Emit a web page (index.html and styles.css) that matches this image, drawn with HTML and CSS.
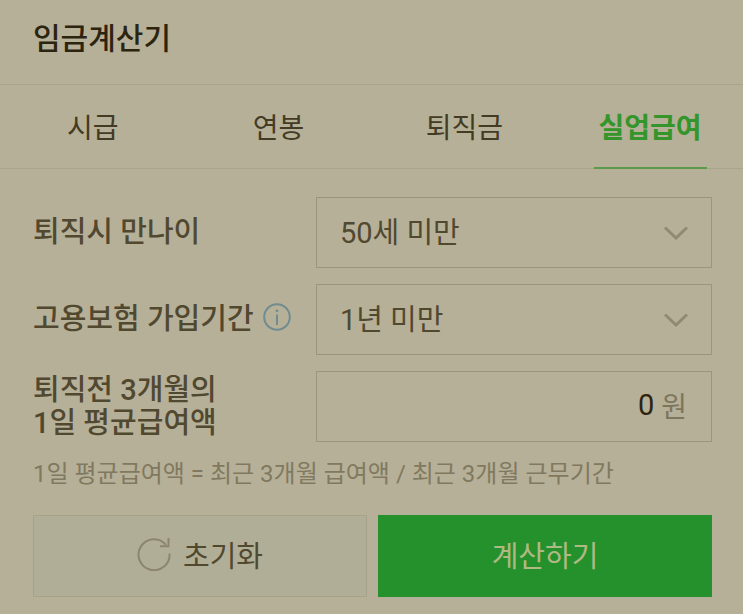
FILE: index.html
```html
<!DOCTYPE html>
<html lang="ko">
<head>
  <meta charset="UTF-8" />
  <meta name="viewport" content="width=device-width, initial-scale=1.0"/>
  <title>임금계산기</title>
  <link rel="stylesheet" href="styles.css">
</head>
<body>

  <header class="header">
    <h1>임금계산기</h1>
  </header>

  <nav class="tabs">
    <a href="#hourly">시급</a>
    <a href="#salary">연봉</a>
    <a href="#severance">퇴직금</a>
    <a href="#benefit" class="active" aria-current="page">실업급여</a>
  </nav>

  <form class="calc-form">
    <div class="form-row">
      <label for="age">퇴직시 만나이</label>
      <div class="field">
        <select id="age">
          <option>50세 미만</option>
          <option>50세 이상</option>
        </select>
        <svg class="arrow" viewBox="0 0 24 14" aria-hidden="true"><path d="M1 1.5 12 12 23 1.5"/></svg>
      </div>
    </div>

    <div class="form-row">
      <div class="label-group">
        <label for="period">고용보험 가입기간</label>
        <button type="button" class="info-btn" aria-label="가입기간 안내">
          <svg viewBox="0 0 28 28" aria-hidden="true">
            <circle cx="14" cy="14" r="12.8"/>
            <path d="M14 11.5V22"/>
            <circle class="dot" cx="14" cy="7.8" r="1.4"/>
          </svg>
        </button>
      </div>
      <div class="field">
        <select id="period">
          <option>1년 미만</option>
          <option>1년 이상 3년 미만</option>
          <option>3년 이상 5년 미만</option>
          <option>5년 이상 10년 미만</option>
          <option>10년 이상</option>
        </select>
        <svg class="arrow" viewBox="0 0 24 14" aria-hidden="true"><path d="M1 1.5 12 12 23 1.5"/></svg>
      </div>
    </div>

    <div class="form-row">
      <label for="pay">퇴직전 3개월의<br>1일 평균급여액</label>
      <div class="field amount">
        <input type="text" id="pay" inputmode="numeric" value="0" />
        <span class="unit">원</span>
      </div>
    </div>

    <p class="hint">1일 평균급여액 = 최근 3개월 급여액 / 최근 3개월 근무기간</p>

    <div class="buttons">
      <button type="reset" class="btn btn-reset">
        <svg viewBox="0 0 34 34" aria-hidden="true">
          <path d="M32.5 16.5A15.5 15.5 0 1 1 29 7.8"/>
          <path d="M31.5 1V9.2H23"/>
        </svg>
        초기화
      </button>
      <button type="submit" class="btn btn-submit">계산하기</button>
    </div>
  </form>

</body>
</html>
```

FILE: styles.css
```css
* {
  box-sizing: border-box;
}
body {
  margin: 0;
  background: #b6b098;
  color: #514830;
  font-family: Roboto, "Noto Sans CJK KR", sans-serif;
  font-size: 29px;
}
.header {
  padding: 15px 33px 21px;
  border-bottom: 1px solid #aaa48c;
}
h1 {
  margin: 0;
  font-size: 30px;
  line-height: 48px;
  font-weight: 500;
  color: #2d2410;
}
.tabs {
  display: grid;
  grid-template-columns: repeat(4, 1fr);
  justify-items: center;
  height: 84px;
  border-bottom: 1px solid #aaa48c;
}
.tabs a {
  height: 84px;
  padding: 0 5px;
  font-size: 28px;
  line-height: 88px;
  color: #443b24;
  text-decoration: none;
}
.tabs .active {
  color: #33952a;
  font-weight: 700;
  border-bottom: 2px solid #5b9a4b;
}
.calc-form {
  padding: 28px 31px 16px 33px;
}
.form-row {
  display: grid;
  grid-template-columns: 5fr 7fr;
  align-items: center;
  margin-bottom: 16px;
}
.form-row label {
  font-weight: 500;
  line-height: 33px;
  white-space: nowrap;
}
.label-group {
  display: flex;
  align-items: flex-start;
  gap: 9px;
}
.info-btn {
  width: 28px;
  height: 28px;
  padding: 0;
  border: none;
  background: none;
  cursor: pointer;
}
.info-btn svg {
  display: block;
  fill: none;
  stroke: #708c90;
  stroke-width: 2;
}
.info-btn .dot {
  fill: #708c90;
  stroke: none;
}
.field {
  display: grid;
  align-items: center;
  height: 71px;
  border: 1px solid #9b957c;
}
.field select {
  grid-area: 1 / 1;
  width: 100%;
  height: 100%;
  padding: 0 60px 0 23px;
  border: none;
  background: none;
  appearance: none;
  color: inherit;
  font: inherit;
}
.arrow {
  grid-area: 1 / 1;
  justify-self: end;
  width: 24px;
  height: 14px;
  margin-right: 23px;
  fill: none;
  stroke: #918a72;
  stroke-width: 3;
  pointer-events: none;
}
.amount {
  grid-template-columns: 1fr auto;
  gap: 7px;
  padding: 0 24px 3px 0;
}
.amount input {
  width: 100%;
  height: 100%;
  padding: 0;
  border: none;
  background: none;
  color: #2d2410;
  font: inherit;
  text-align: right;
}
.unit {
  font-size: 28px;
  color: #7d755c;
}
.hint {
  margin: 0 0 25px;
  font-size: 24px;
  line-height: 32px;
  color: #81795f;
}
.buttons {
  display: grid;
  grid-template-columns: 1fr 1fr;
  gap: 11px;
}
.btn {
  display: flex;
  align-items: center;
  justify-content: center;
  gap: 12px;
  height: 82px;
  padding: 0 0 4px;
  border: none;
  font-family: inherit;
  font-size: 29px;
  cursor: pointer;
}
.btn-reset {
  border: 1px solid #a5a289;
  background: #b0ae96;
  color: #514830;
}
.btn-reset svg {
  width: 34px;
  height: 34px;
  fill: none;
  stroke: #8c856d;
  stroke-width: 2;
}
.btn-submit {
  background: #25912c;
  color: #b0b984;
}
```
